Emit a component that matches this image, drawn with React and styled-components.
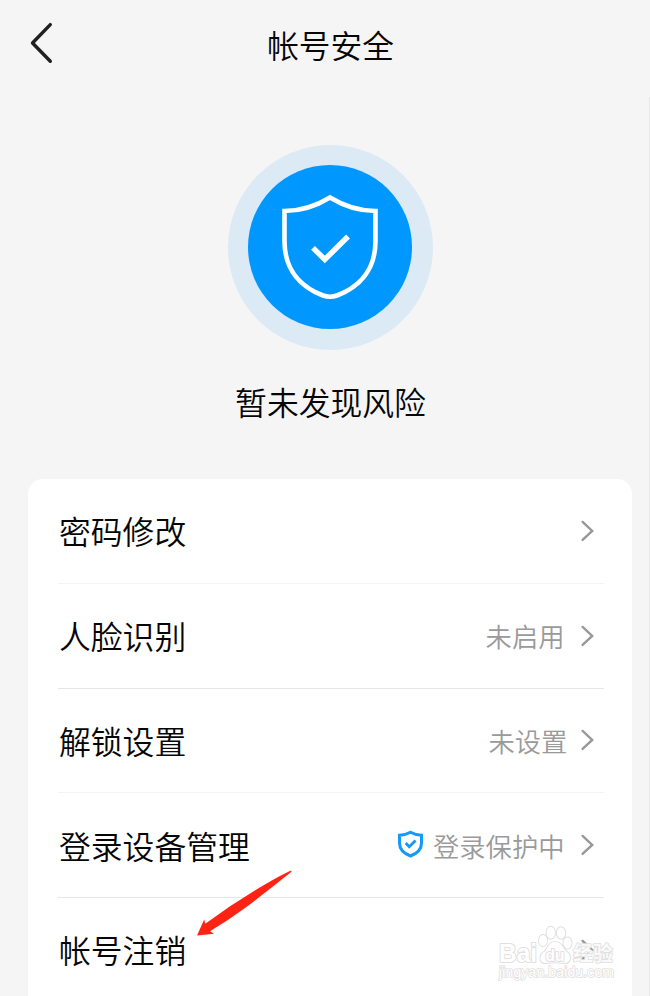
import React from "react";
import styled, { createGlobalStyle } from "styled-components";

const GlobalStyle = createGlobalStyle`
  * { box-sizing: border-box; }
  html, body { margin: 0; padding: 0; background: #f5f5f5; overflow: hidden; }
`;

const Page = styled.div`
  position: relative;
  width: 650px;
  height: 996px;
  overflow: hidden;
  padding: 0 18px 0 28px;
  display: flex;
  flex-direction: column;
  background: #f5f5f5;
  color: #060606;
  font-family: "Noto Sans CJK SC", sans-serif;
`;

const Header = styled.header`
  flex: none;
  height: 90px;
  display: grid;
  grid-template-columns: 60px 1fr 60px;
  align-items: center;
`;

const BackButton = styled.button`
  display: flex;
  width: 26px;
  height: 44px;
  margin-top: -4px;
  padding: 0;
  border: 0;
  background: none;
`;

const Title = styled.h1`
  margin: 0 0 2px 1px;
  font-size: 31.7px;
  line-height: 48px;
  font-weight: 350;
  text-align: center;
`;

const Status = styled.section`
  flex: none;
  height: 389px;
  padding-top: 55px;
  display: flex;
  flex-direction: column;
  align-items: center;
`;

const Halo = styled.div`
  width: 205px;
  height: 205px;
  padding: 20px;
  margin-left: 1px;
  border-radius: 50%;
  background: #dbeaf5;
`;

const Disc = styled.div`
  width: 164px;
  height: 164px;
  display: flex;
  border-radius: 50%;
  background: #0098ff;
`;

const StatusText = styled.p`
  margin: 27px 0 0 1px;
  font-size: 31.8px;
  line-height: 48px;
  font-weight: 350;
`;

const Card = styled.main`
  flex: none;
  width: 604px;
  height: 540px;
  padding: 0 28px 0 30px;
  border-radius: 15px;
  background: #fff;
`;

const Row = styled.div`
  display: flex;
  align-items: center;
  height: 104.75px;
  border-bottom: 1px solid ${(p) => (p.$faint ? "#f3f3f3" : "#e6e6e6")};
`;

const Label = styled.span`
  flex: 1;
  padding: 0 0 1px 1px;
  font-size: 31.8px;
  line-height: 48px;
  font-weight: 350;
`;

const Value = styled.span`
  padding-top: 1px;
  margin-right: ${(p) => p.$gap}px;
  color: #9a9a9a;
  font-size: 26.3px;
  line-height: 40px;
  font-weight: 350;
`;

const ShieldSlot = styled.span`
  display: flex;
  margin: 0 9px 2px 0;
`;

const ChevronSlot = styled.span`
  display: flex;
  width: 24px;
  height: 24px;
`;

const PageEdge = styled.div`
  position: absolute;
  right: 0;
  top: 97px;
  bottom: 0;
  width: 1px;
  background: #e9e9e9;
`;

const ArrowOverlay = styled.svg`
  position: absolute;
  left: 190px;
  top: 865px;
`;

const Watermark = styled.svg`
  position: absolute;
  left: 494px;
  top: 920px;
  paint-order: stroke;
`;

const rows = [
  { label: "密码修改", faint: true },
  { label: "人脸识别", value: "未启用", gap: 15.5 },
  { label: "解锁设置", value: "未设置", gap: 12.7, faint: true },
  { label: "登录设备管理", value: "登录保护中", gap: 15.5, shield: true },
  { label: "帐号注销" },
];

function Chevron() {
  return (
    <svg width="24" height="24" fill="none" stroke="#989898" strokeWidth="2.4" strokeLinecap="round">
      <path d="M2.6 2.9 L12.2 11.9 L2.6 20.9" />
    </svg>
  );
}

function SmallShield() {
  return (
    <svg width="27" height="28" fill="none" stroke="#1698f5" strokeWidth="3">
      <path d="M13.5 2.2 Q19 5.2 24.5 5.2 V13 C24.5 20 19.5 23.7 13.5 26 C7.5 23.7 2.5 20 2.5 13 V5.2 Q8 5.2 13.5 2.2 Z" />
      <path d="M8.7 13.1 L12.2 16.7 L18.6 10.4" strokeWidth="2.8" />
    </svg>
  );
}

export default function App() {
  return (
    <>
      <GlobalStyle />
      <Page>
        <Header>
          <BackButton aria-label="返回">
            <svg width="26" height="44" fill="none" stroke="#202020" strokeWidth="3.4" strokeLinecap="round" strokeLinejoin="round">
              <path d="M22.3 3.6 L4.5 22 L22.3 40.2" />
            </svg>
          </BackButton>
          <Title>帐号安全</Title>
        </Header>
        <Status>
          <Halo>
            <Disc>
              <svg width="164" height="164" fill="none" stroke="#fff">
                <path strokeWidth="4.6" d="M82 32.5 Q104 46 127.5 46 V76 C127.5 106 110 122.5 89 130.5 Q82 133 75 130.5 C54 122.5 36.5 106 36.5 76 V46 Q60 46 82 32.5 Z" />
                <path strokeWidth="5.4" d="M65 82.8 L76.8 94.5 L100 71.5" />
              </svg>
            </Disc>
          </Halo>
          <StatusText>暂未发现风险</StatusText>
        </Status>
        <Card>
          {rows.map((row) => (
            <Row key={row.label} $faint={row.faint}>
              <Label>{row.label}</Label>
              {row.shield && <ShieldSlot><SmallShield /></ShieldSlot>}
              {row.value && <Value $gap={row.gap}>{row.value}</Value>}
              <ChevronSlot><Chevron /></ChevronSlot>
            </Row>
          ))}
        </Card>
        <PageEdge />
        <ArrowOverlay width="110" height="80">
          <path d="M7 70.5 L14.2 54.5 L15.3 58.8 Q43 38 74 20 Q90 10.500 100.500 5.700 L101.800 6.600 Q77 26.500 55 43 Q38 55.500 20 66.300 L24 68.700 Z" fill="#ff2314" />
        </ArrowOverlay>
        <Watermark width="130" height="70" fontFamily='"Liberation Sans", sans-serif' fill="#fff" stroke="#e0e0e0" strokeWidth="2" strokeLinejoin="round">
          <text x="5" y="42" fontSize="26" fontWeight="700" textLength="38" lengthAdjust="spacingAndGlyphs">Bai</text>
          <ellipse cx="49" cy="20.5" rx="4" ry="5.5" />
          <ellipse cx="56.7" cy="12.7" rx="4.2" ry="6" />
          <ellipse cx="67" cy="13" rx="4.2" ry="5.8" />
          <ellipse cx="73.5" cy="23" rx="4" ry="5.5" />
          <path d="M61 22 C54 22 54 29 50 32 C44 36 46 44 53 43 Q61 41.5 69 43 C77 44 78 36 73 32 C69 29 68 22 61 22 Z" />
          <text x="51.5" y="40.5" fontSize="17" fontWeight="700" textLength="19" lengthAdjust="spacingAndGlyphs">du</text>
          <text x="79" y="41" fontSize="20" fontWeight="700" fillOpacity="0.8" strokeWidth="1.6" fontFamily='"Noto Sans CJK SC", sans-serif'>经验</text>
          <text x="5" y="57" fontSize="14" textLength="115" strokeWidth="1.6">jingyan.baidu.com</text>
        </Watermark>
      </Page>
    </>
  );
}
